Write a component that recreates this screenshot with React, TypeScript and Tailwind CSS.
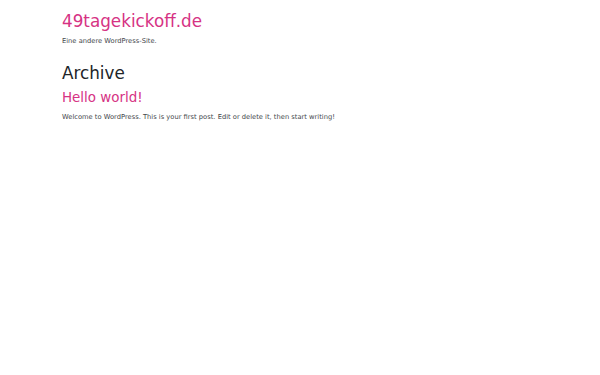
import React from 'react';

const App = () => {
  return (
    <div className="min-h-screen bg-white font-['DejaVu_Sans',sans-serif] text-[#212529]">
      <div className="px-[62px] pt-[11px]">
        <header>
          <a href="#" className="block text-[16.8px] leading-[20.16px] text-[#d63384] mb-[4.6px]">49tagekickoff.de</a>
          <p className="text-[6.72px] leading-[10.08px] text-[#45494d]">Eine andere WordPress-Site.</p>
        </header>
        <main className="pt-[16.8px]">
          <h1 className="text-[16.8px] leading-[20.16px] mb-[7.4px]">Archive</h1>
          <article>
            <h2 className="text-[13.44px] leading-[16.13px] mb-[6.2px]">
              <a href="#" className="text-[#d63384]">Hello world!</a>
            </h2>
            <p className="text-[6.72px] leading-[10.08px] text-[#45494d]">
              Welcome to WordPress. This is your first post. Edit or delete it, then start writing!
            </p>
          </article>
        </main>
      </div>
    </div>
  );
};

export default App;
